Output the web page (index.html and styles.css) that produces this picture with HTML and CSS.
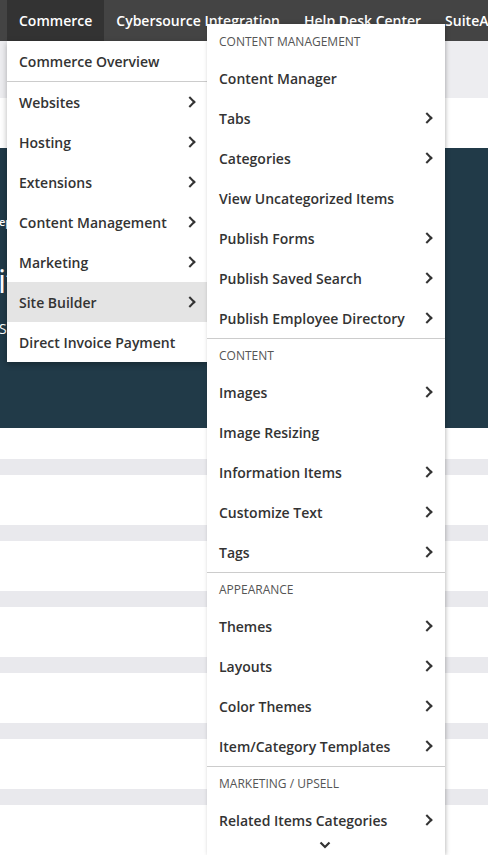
FILE: index.html
```html
<!DOCTYPE html>
<html lang="en">
<head>
  <meta charset="UTF-8">
  <title>Commerce - Site Builder</title>
  <meta name="viewport" content="width=device-width, initial-scale=1.0">
  <link rel="stylesheet" href="styles.css">
</head>
<body>

  <nav class="topnav">
    <a class="topnav-item active">Commerce</a>
    <a class="topnav-item">Cybersource Integration</a>
    <a class="topnav-item">Help Desk Center</a>
    <a class="topnav-item">SuiteAnswers</a>
  </nav>

  <div class="page">
    <div class="subbar"></div>
    <div class="strip"></div>
    <div class="hero">
      <p class="hero-kicker">eporting center</p>
      <h1 class="hero-title">itle</h1>
      <p class="hero-sub">Summary</p>
    </div>
    <div class="strip short"></div>
    <div class="rows">
      <div class="row"></div>
      <div class="row"></div>
      <div class="row"></div>
      <div class="row"></div>
      <div class="row"></div>
      <div class="row"></div>
    </div>
  </div>

  <!-- first level menu -->
  <ul class="menu">
    <li class="menu-item overview">Commerce Overview</li>
    <li class="menu-item has-sub">Websites</li>
    <li class="menu-item has-sub">Hosting</li>
    <li class="menu-item has-sub">Extensions</li>
    <li class="menu-item has-sub">Content Management</li>
    <li class="menu-item has-sub">Marketing</li>
    <li class="menu-item has-sub hover">Site Builder</li>
    <li class="menu-item">Direct Invoice Payment</li>
  </ul>

  <!-- Site Builder submenu -->
  <div class="submenu">
    <div class="group first">
      <div class="group-title">Content Management</div>
      <div class="menu-item">Content Manager</div>
      <div class="menu-item has-sub">Tabs</div>
      <div class="menu-item has-sub">Categories</div>
      <div class="menu-item">View Uncategorized Items</div>
      <div class="menu-item has-sub">Publish Forms</div>
      <div class="menu-item has-sub">Publish Saved Search</div>
      <div class="menu-item has-sub">Publish Employee Directory</div>
    </div>
    <div class="group">
      <div class="group-title">Content</div>
      <div class="menu-item has-sub">Images</div>
      <div class="menu-item">Image Resizing</div>
      <div class="menu-item has-sub">Information Items</div>
      <div class="menu-item has-sub">Customize Text</div>
      <div class="menu-item has-sub">Tags</div>
    </div>
    <div class="group">
      <div class="group-title">Appearance</div>
      <div class="menu-item has-sub">Themes</div>
      <div class="menu-item has-sub">Layouts</div>
      <div class="menu-item has-sub">Color Themes</div>
      <div class="menu-item has-sub">Item/Category Templates</div>
    </div>
    <div class="group">
      <div class="group-title">Marketing / Upsell</div>
      <div class="menu-item has-sub">Related Items Categories</div>
    </div>
    <div class="scroll-down">
      <svg width="12" height="8" viewBox="0 0 12 8"><path d="M1.5 1.5 L6 6 L10.5 1.5" fill="none" stroke="#333" stroke-width="2.2"/></svg>
    </div>
  </div>

</body>
</html>
```

FILE: styles.css
```css
body {
  margin: 0;
  width: 488px;
  height: 855px;
  overflow: hidden;
  position: relative;
  font-family: "Open Sans", "Liberation Sans", sans-serif;
  background: #fff;
}
.topnav {
  display: flex;
  height: 41px;
  padding-left: 7px;
  background-color: #444;
  white-space: nowrap;
}
.topnav-item {
  display: flex;
  align-items: center;
  padding: 0 12px;
  color: #fff;
  font-size: 14px;
  font-weight: 600;
}
.topnav-item.active {
  background-color: #333;
}
.subbar {
  height: 57px;
  background-color: #ededf0;
}
.strip {
  height: 50px;
  background-color: #fff;
}
.strip.short {
  height: 31px;
}
.hero {
  height: 280px;
  box-sizing: border-box;
  padding-top: 66px;
  background-color: #213a48;
  color: #fff;
}
.hero-kicker {
  margin: 0 0 32px -1px;
  font-size: 11px;
  font-weight: 600;
}
.hero-title {
  margin: 0 0 18px -2px;
  font-size: 32px;
  font-weight: 400;
  line-height: 40px;
}
.hero-sub {
  margin: 0 0 0 -1px;
  font-size: 14px;
}
.row {
  height: 50px;
  border-top: 16px solid #e9e9ed;
  background-color: #fff;
}

/* dropdowns */
.menu {
  position: absolute;
  top: 41px;
  left: 7px;
  width: 200px;
  margin: 0;
  padding: 0;
  list-style: none;
  background-color: #fff;
  box-shadow: 0 2px 6px rgba(0,0,0,0.3);
  z-index: 10;
}
.menu-item {
  position: relative;
  display: flex;
  align-items: center;
  height: 40px;
  padding: 0 12px;
  color: #333;
  font-size: 14px;
  font-weight: 600;
  white-space: nowrap;
}
.menu-item.overview {
  border-bottom: 1px solid #ccc;
}
.menu-item.hover {
  background-color: #e4e4e4;
}
.menu-item.has-sub::after {
  content: "";
  position: absolute;
  right: 13px;
  top: 16px;
  width: 6px;
  height: 6px;
  border-top: 2px solid #333;
  border-right: 2px solid #333;
  transform: rotate(45deg);
}
.submenu .menu-item.has-sub::after {
  right: 14px;
}
.submenu {
  position: absolute;
  top: 24px;
  left: 207px;
  width: 238px;
  height: 831px;
  overflow: hidden;
  background-color: #fff;
  box-shadow: 1px 0 4px rgba(0,0,0,0.25);
  z-index: 11;
}
.group {
  border-top: 1px solid #ccc;
}
.group.first {
  border-top: none;
}
.group-title {
  display: flex;
  align-items: center;
  height: 33px;
  padding: 0 12px;
  color: #555;
  font-size: 12px;
  text-transform: uppercase;
}
.group.first .group-title {
  height: 34px;
}
.scroll-down {
  position: absolute;
  left: 0;
  right: 0;
  bottom: 6px;
  display: flex;
  justify-content: center;
  padding-right: 2px;
}
```
